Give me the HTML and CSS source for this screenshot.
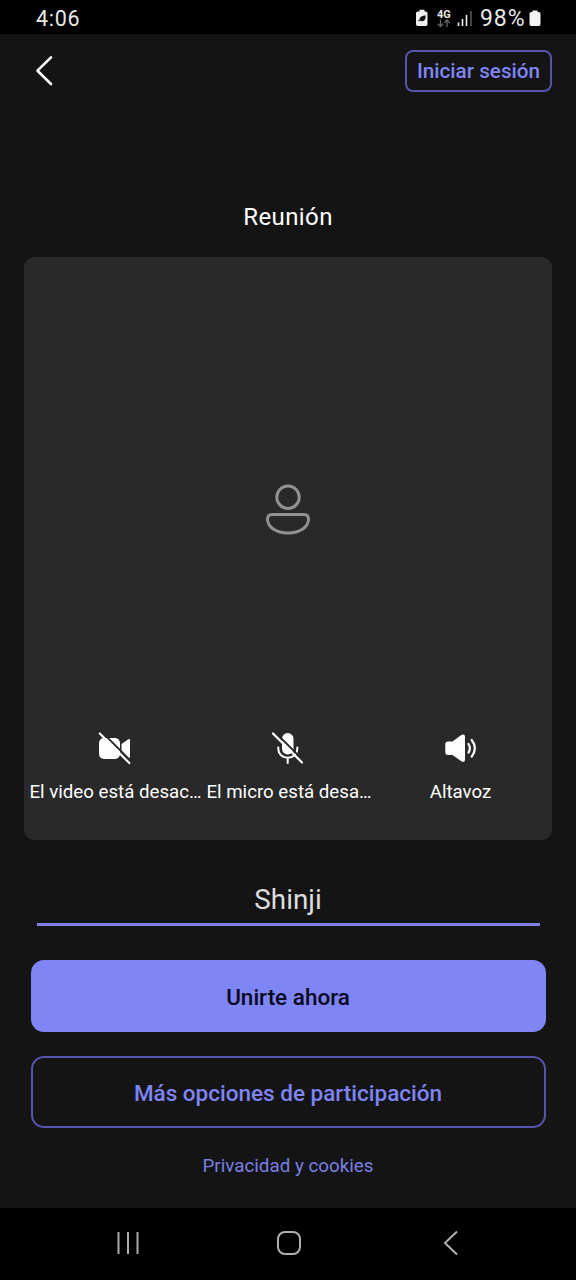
FILE: index.html
```html
<!DOCTYPE html>
<html lang="es">
<head>
<meta charset="utf-8">
<title>Reunión</title>
<link rel="stylesheet" href="styles.css">
</head>
<body>
<div class="screen">
  <div class="status-bar">
    <span class="clock">4:06</span>
    <div class="status-icons">
      <svg class="saver" width="14" height="18" viewBox="0 0 14 18"><path d="M4.500 .8h5v1.700h1.300q1.700 0 1.700 1.700v11q0 1.700-1.700 1.700H2.700Q1 16.900 1 15.200V4.200q0-1.700 1.700-1.700h1.800z" fill="#f0f0f0"/><path d="M10.500 6.300q.6 5.600-3.300 6-1.400.1-2-.8l-1.700 1-.6-.8 1.700-1q-.3-3.400 5.900-4.400z" fill="#111"/></svg>
      <div class="network">
        <span class="network-type">4G</span>
        <svg width="14" height="9" viewBox="0 0 14 9" fill="none" stroke="#666" stroke-width="1.300"><path d="M3.500.5V7.500M.8 4.800L3.500 7.500 6.200 4.800M10 8V1M7.300 3.700L10 1l2.700 2.700"/></svg>
      </div>
      <svg class="signal" width="16" height="17" viewBox="0 0 16 17"><path d="M1.500 12.500V16M5.500 9V16M9.500 5V16" stroke="#eee" stroke-width="1.600"/><path d="M14 1V16" stroke="#555" stroke-width="1.600"/></svg>
      <span class="percent">98%</span>
      <svg class="battery" width="12" height="17" viewBox="0 0 12 17"><path d="M3.500.5h5V2H9.800q1.700 0 1.700 1.700v10.600q0 1.700-1.700 1.700H2.200Q.5 16 .5 14.300V3.700Q.5 2 2.200 2h1.300z" fill="#f4f4f4"/></svg>
    </div>
  </div>

  <main class="app">
    <header class="toolbar">
      <svg width="20" height="32" viewBox="0 0 20 32" fill="none" stroke="#fff" stroke-width="2.600" stroke-linecap="round" stroke-linejoin="round"><path d="M16 3.300L2.500 16.700 16 30"/></svg>
      <button class="btn sign-in">Iniciar sesión</button>
    </header>
    <h1 class="title">Reunión</h1>

    <section class="preview">
      <div class="avatar">
        <svg width="48" height="54" viewBox="0 0 48 54" fill="none" stroke="#929292" stroke-width="3"><circle cx="24" cy="14.200" r="11.200"/><path d="M8 31.500H40Q44.500 31.500 44.500 36C44.500 44 36 50 24 50S3.500 44 3.500 36Q3.500 31.500 8 31.500z"/></svg>
      </div>
      <div class="controls">
        <div class="control">
          <svg width="36" height="36" viewBox="0 0 36 36"><rect x="2" y="8" width="21" height="21" rx="5" fill="#fff"/><path d="M24.500 14L31.300 9.200Q33 8.300 33 10V27Q33 28.600 31.300 27.700L24.500 23z" fill="#fff"/><path d="M4.800 1.900L35 32.100" stroke="#292929" stroke-width="2"/><path d="M2.800 3.500L32.300 33" stroke="#fff" stroke-width="2.200" stroke-linecap="round"/></svg>
          <span class="label">El video está desac…</span>
        </div>
        <div class="control">
          <svg width="36" height="36" viewBox="0 0 36 36"><rect x="12" y="3" width="11.500" height="21.500" rx="5.700" fill="#fff"/><path d="M8.300 17.500v1.500a9.500 8.700 0 0 0 19 0v-1.500M17.700 27.700V33" fill="none" stroke="#fff" stroke-width="2" stroke-linecap="round"/><path d="M5.300 2.400L34.500 31.600" stroke="#292929" stroke-width="2"/><path d="M3 3.500L32 32.500" stroke="#fff" stroke-width="2.200" stroke-linecap="round"/></svg>
          <span class="label">El micro está desa…</span>
        </div>
        <div class="control">
          <svg width="36" height="36" viewBox="0 0 36 36"><path d="M6 11.500H10.500L19 5.200Q23 3.200 23 7V29.500Q23 33.300 19 31L10.500 25H6Q3.300 25 3.300 22.300V14.200Q3.300 11.500 6 11.500z" fill="#fff"/><path d="M26.500 14Q29.200 18.300 26.500 22.600M29.700 10Q36 18.300 29.700 26.700" fill="none" stroke="#fff" stroke-width="2.200" stroke-linecap="round"/></svg>
          <span class="label">Altavoz</span>
        </div>
      </div>
    </section>

    <div class="name-field">Shinji</div>
    <button class="btn join">Unirte ahora</button>
    <button class="btn options">Más opciones de participación</button>
    <a class="privacy">Privacidad y cookies</a>
  </main>

  <nav class="nav-bar">
    <svg width="26" height="26" viewBox="0 0 26 26" stroke="#aaa" stroke-width="2"><path d="M3.500 2V24M13 2V24M22.500 2V24"/></svg>
    <svg width="26" height="26" viewBox="0 0 26 26" fill="none" stroke="#b0b0b0" stroke-width="2"><rect x="2" y="2" width="22" height="22" rx="7"/></svg>
    <svg width="26" height="26" viewBox="0 0 26 26" fill="none" stroke="#b0b0b0" stroke-width="2"><path d="M20 1.500L8 13 20 24.500"/></svg>
  </nav>
</div>
</body>
</html>
```
FILE: styles.css
```css
* { box-sizing: border-box; }
body { margin: 0; background: #000; font-family: Roboto, "Liberation Sans", sans-serif; color: #fff; }
svg { display: block; flex: none; }
.screen { width: 576px; height: 1280px; display: flex; flex-direction: column; }

.status-bar { height: 34px; flex: none; background: #000; display: flex; justify-content: space-between; padding: 0 35px 0 36px; color: #e8e8e8; }
.clock { font-size: 21.500px; line-height: 38px; letter-spacing: .7px; }
.status-icons { display: flex; }
.saver { margin-top: 9px; }
.network { width: 14px; margin: 9px 0 0 8px; }
.network-type { display: block; height: 10px; font-size: 11px; line-height: 11px; font-weight: 700; }
.signal { margin: 10px 0 0 6px; }
.percent { width: 49px; margin-left: 7px; font-size: 23px; line-height: 38px; letter-spacing: .9px; }
.battery { margin-top: 10px; }

.app { height: 1174px; flex: none; background: #141414; display: flex; flex-direction: column; align-items: center; }
.toolbar { width: 100%; height: 74px; padding: 16px 24px 0 35px; display: flex; justify-content: space-between; align-items: flex-start; }
.toolbar svg { margin-top: 4px; }
.btn { font-family: inherit; font-weight: 500; padding: 0; border: 2px solid #5654ac; background: transparent; color: #7f85f5; white-space: nowrap; }
.sign-in { width: 147px; height: 42px; border-radius: 8px; font-size: 20.700px; }
.title { margin: 94px 0 0; height: 55px; font-size: 24px; line-height: 31px; font-weight: 400; letter-spacing: .4px; }

.preview { width: 528px; height: 583px; border-radius: 11px; background: #292929; display: flex; flex-direction: column; }
.avatar { height: 473px; padding-top: 226px; display: flex; justify-content: center; }
.controls { display: grid; grid-template-columns: 177px 170px 173px; padding-left: 3px; }
.control { display: flex; flex-direction: column; align-items: center; }
.control svg { margin-right: 2px; }
.label { margin-top: 13px; font-size: 18.700px; line-height: 27px; white-space: nowrap; }

.name-field { width: 503px; height: 50px; margin-top: 36px; padding-top: 6px; border-bottom: 3px solid #7f80df; font-size: 27.800px; line-height: 35px; text-align: center; color: #ddd; }
.join, .options { width: 515px; height: 72px; border-radius: 13px; font-size: 22.500px; padding-top: 2px; }
.join { margin-top: 34px; border: 0; background: #7f85f5; color: #080820; }
.options { margin-top: 24px; }
.privacy { margin-top: 25px; font-size: 18.800px; line-height: 26px; color: #7b7fe3; }

.nav-bar { height: 72px; background: #000; display: flex; justify-content: space-between; padding: 22px 113px 0 115px; }
```
